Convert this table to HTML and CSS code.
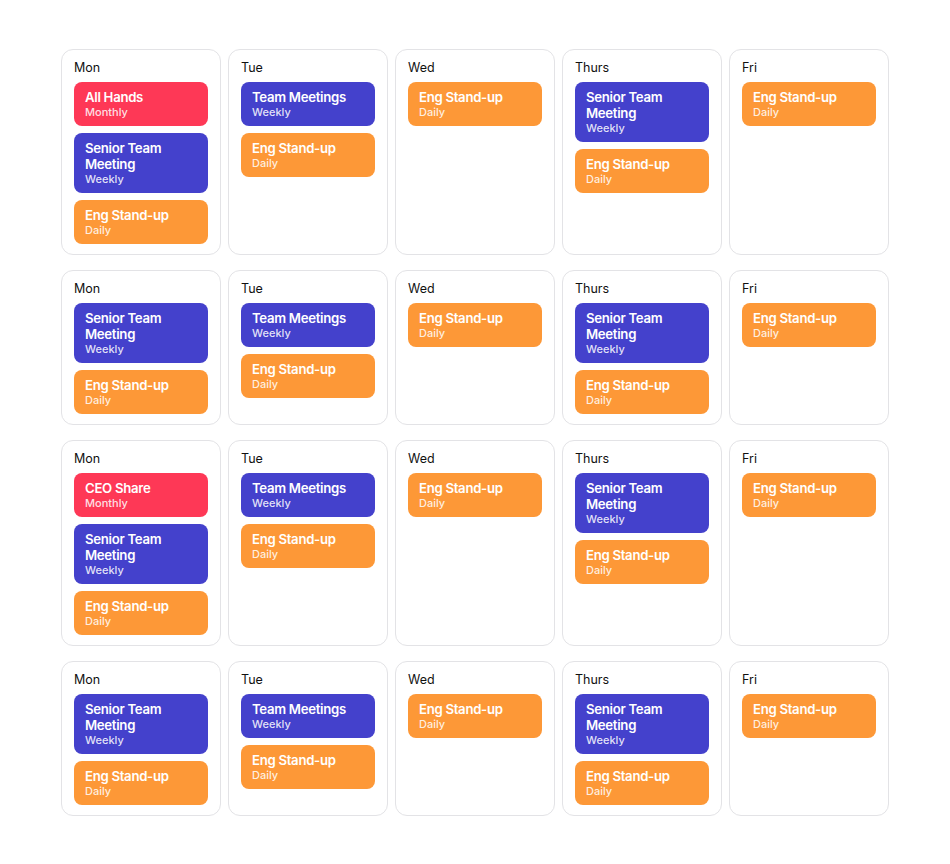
FILE: index.html
```html
<!DOCTYPE html>
<html>
<head>
<meta charset="utf-8">
<link rel="stylesheet" href="styles.css">
</head>
<body>
<div class="board">
  <div class="day"><div class="day-name">Mon</div>
    <div class="ev red"><div class="t">All Hands</div><div class="s">Monthly</div></div>
    <div class="ev blue"><div class="t">Senior Team Meeting</div><div class="s">Weekly</div></div>
    <div class="ev orange"><div class="t">Eng Stand-up</div><div class="s">Daily</div></div>
  </div>
  <div class="day"><div class="day-name">Tue</div>
    <div class="ev blue"><div class="t">Team Meetings</div><div class="s">Weekly</div></div>
    <div class="ev orange"><div class="t">Eng Stand-up</div><div class="s">Daily</div></div>
  </div>
  <div class="day"><div class="day-name">Wed</div>
    <div class="ev orange"><div class="t">Eng Stand-up</div><div class="s">Daily</div></div>
  </div>
  <div class="day"><div class="day-name">Thurs</div>
    <div class="ev blue"><div class="t">Senior Team Meeting</div><div class="s">Weekly</div></div>
    <div class="ev orange"><div class="t">Eng Stand-up</div><div class="s">Daily</div></div>
  </div>
  <div class="day"><div class="day-name">Fri</div>
    <div class="ev orange"><div class="t">Eng Stand-up</div><div class="s">Daily</div></div>
  </div>

  <div class="day"><div class="day-name">Mon</div>
    <div class="ev blue"><div class="t">Senior Team Meeting</div><div class="s">Weekly</div></div>
    <div class="ev orange"><div class="t">Eng Stand-up</div><div class="s">Daily</div></div>
  </div>
  <div class="day"><div class="day-name">Tue</div>
    <div class="ev blue"><div class="t">Team Meetings</div><div class="s">Weekly</div></div>
    <div class="ev orange"><div class="t">Eng Stand-up</div><div class="s">Daily</div></div>
  </div>
  <div class="day"><div class="day-name">Wed</div>
    <div class="ev orange"><div class="t">Eng Stand-up</div><div class="s">Daily</div></div>
  </div>
  <div class="day"><div class="day-name">Thurs</div>
    <div class="ev blue"><div class="t">Senior Team Meeting</div><div class="s">Weekly</div></div>
    <div class="ev orange"><div class="t">Eng Stand-up</div><div class="s">Daily</div></div>
  </div>
  <div class="day"><div class="day-name">Fri</div>
    <div class="ev orange"><div class="t">Eng Stand-up</div><div class="s">Daily</div></div>
  </div>

  <div class="day"><div class="day-name">Mon</div>
    <div class="ev red"><div class="t">CEO Share</div><div class="s">Monthly</div></div>
    <div class="ev blue"><div class="t">Senior Team Meeting</div><div class="s">Weekly</div></div>
    <div class="ev orange"><div class="t">Eng Stand-up</div><div class="s">Daily</div></div>
  </div>
  <div class="day"><div class="day-name">Tue</div>
    <div class="ev blue"><div class="t">Team Meetings</div><div class="s">Weekly</div></div>
    <div class="ev orange"><div class="t">Eng Stand-up</div><div class="s">Daily</div></div>
  </div>
  <div class="day"><div class="day-name">Wed</div>
    <div class="ev orange"><div class="t">Eng Stand-up</div><div class="s">Daily</div></div>
  </div>
  <div class="day"><div class="day-name">Thurs</div>
    <div class="ev blue"><div class="t">Senior Team Meeting</div><div class="s">Weekly</div></div>
    <div class="ev orange"><div class="t">Eng Stand-up</div><div class="s">Daily</div></div>
  </div>
  <div class="day"><div class="day-name">Fri</div>
    <div class="ev orange"><div class="t">Eng Stand-up</div><div class="s">Daily</div></div>
  </div>

  <div class="day"><div class="day-name">Mon</div>
    <div class="ev blue"><div class="t">Senior Team Meeting</div><div class="s">Weekly</div></div>
    <div class="ev orange"><div class="t">Eng Stand-up</div><div class="s">Daily</div></div>
  </div>
  <div class="day"><div class="day-name">Tue</div>
    <div class="ev blue"><div class="t">Team Meetings</div><div class="s">Weekly</div></div>
    <div class="ev orange"><div class="t">Eng Stand-up</div><div class="s">Daily</div></div>
  </div>
  <div class="day"><div class="day-name">Wed</div>
    <div class="ev orange"><div class="t">Eng Stand-up</div><div class="s">Daily</div></div>
  </div>
  <div class="day"><div class="day-name">Thurs</div>
    <div class="ev blue"><div class="t">Senior Team Meeting</div><div class="s">Weekly</div></div>
    <div class="ev orange"><div class="t">Eng Stand-up</div><div class="s">Daily</div></div>
  </div>
  <div class="day"><div class="day-name">Fri</div>
    <div class="ev orange"><div class="t">Eng Stand-up</div><div class="s">Daily</div></div>
  </div>
</div>
</body>
</html>
```

FILE: styles.css
```css
html, body {
  margin: 0;
  padding: 0;
  background: #ffffff;
}
body {
  font-family: Inter, "Noto Sans", sans-serif;
  color: #111111;
}
.board {
  display: grid;
  grid-template-columns: repeat(5, 160px);
  column-gap: 7px;
  row-gap: 15px;
  padding: 49px 61px;
}
.day {
  border: 1px solid #e3e3e6;
  border-radius: 12px;
  padding: 10px 12px 10px 12px;
  display: flex;
  flex-direction: column;
  gap: 7px;
}
.day-name {
  font-size: 12.5px;
  line-height: 16px;
  margin-bottom: -1px;
  color: #111111;
}
.ev {
  border-radius: 8px;
  padding: 7px 11px 7px 11px;
  color: #ffffff;
}
.ev .t {
  font-size: 13.2px;
  font-weight: 600;
  line-height: 16px;
  letter-spacing: -0.3px;
}
.ev .s {
  font-size: 11px;
  font-weight: 500;
  line-height: 14px;
  color: rgba(255, 255, 255, 0.86);
}
.red { background: #fe3856; }
.blue { background: #4441cc; }
.orange { background: #fd9837; }
```
